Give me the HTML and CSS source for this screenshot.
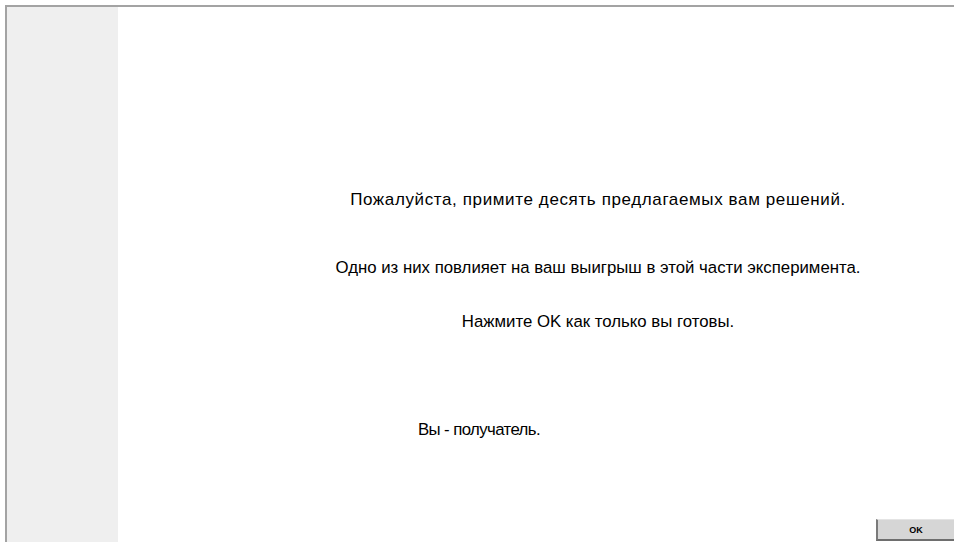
FILE: index.html
```html
<!DOCTYPE html>
<html lang="ru">
<head>
<meta charset="utf-8">
<title>Инструкция</title>
<link rel="stylesheet" href="styles.css">
</head>
<body>
<div class="frame">
  <aside class="sidebar"></aside>
  <main class="content">
    <div class="messages">
      <p class="msg msg-first">Пожалуйста, примите десять предлагаемых вам решений.</p>
      <p class="msg msg-second">Одно из них повлияет на ваш выигрыш в этой части эксперимента.</p>
      <p class="msg msg-third">Нажмите OK как только вы готовы.</p>
    </div>
    <p class="role">Вы - получатель.</p>
    <div class="actions">
      <button class="ok-btn" type="button">OK</button>
    </div>
  </main>
</div>
</body>
</html>
```
FILE: styles.css
```css
html, body {
  margin: 0;
  padding: 0;
  height: 100%;
  overflow: hidden;
  background: #ffffff;
}

body {
  font-family: "Liberation Sans", Arial, sans-serif;
  color: #000000;
}

.frame {
  margin: 5px 0 0 5px;
  height: calc(100% - 5px);
  border-top: 2px solid #a3a3a3;
  border-left: 2px solid #a3a3a3;
  display: flex;
  box-sizing: border-box;
}

.sidebar {
  width: 111px;
  flex: none;
  background: #efefef;
}

.content {
  flex: 1;
  display: flex;
  flex-direction: column;
  min-width: 0;
  overflow: hidden;
}

/* text block is centred a little right of the content area's middle */
.messages {
  padding: 183px 0 0 124px;
  text-align: center;
}

.msg {
  margin: 0;
  font-size: 16.8px;
  line-height: 20px;
  white-space: nowrap;
}

.msg-first {
  font-size: 17px;
  letter-spacing: 0.62px;
}

.msg-second {
  margin-top: 48px;
}

.msg-third {
  margin-top: 34px;
}

.role {
  margin: 88px 0 0 300px;
  font-size: 16.8px;
  letter-spacing: -0.6px;
  line-height: 20px;
}

.actions {
  margin-top: auto;
  display: flex;
  justify-content: flex-end;
  padding-bottom: 1px;
}

.ok-btn {
  width: 78px;
  height: 22px;
  margin: 0;
  padding: 0;
  background: #d6d6d6;
  border: none;
  border-left: 2px solid #7a7a7a;
  border-bottom: 2px solid #6e6e6e;
  border-top: 1px solid #e4e4e4;
  font-family: "Liberation Sans", Arial, sans-serif;
  font-weight: bold;
  font-size: 9px;
  color: #000000;
}
```
